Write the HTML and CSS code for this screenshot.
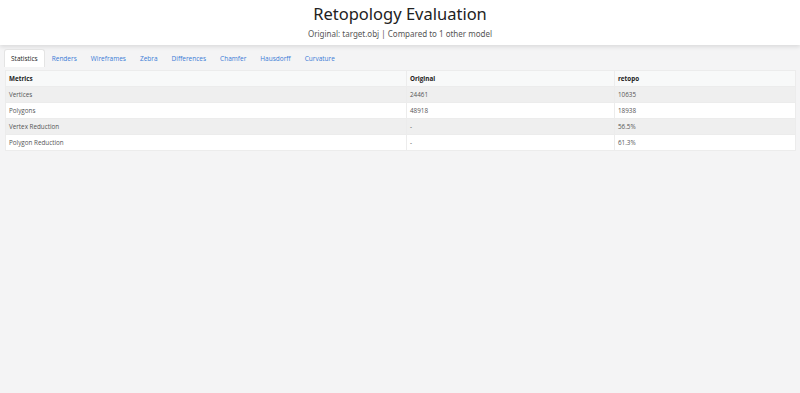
FILE: index.html
```html
<!DOCTYPE html>
<html lang="en">
<head>
    <meta charset="UTF-8">
    <meta name="viewport" content="width=device-width, initial-scale=1.0">
    <title>Retopology Evaluation</title>
    <link rel="stylesheet" href="styles.css">
</head>
<body>

<div class="header">
    <h1>Retopology Evaluation</h1>
    <p>Original: target.obj | Compared to 1 other model</p>
</div>

<div class="tabs">
    <div class="tab active">Statistics</div>
    <div class="tab">Renders</div>
    <div class="tab">Wireframes</div>
    <div class="tab">Zebra</div>
    <div class="tab">Differences</div>
    <div class="tab">Chamfer</div>
    <div class="tab">Hausdorff</div>
    <div class="tab">Curvature</div>
</div>

<div class="panel">
    <table class="stats">
        <thead>
            <tr>
                <th class="col-metric">Metrics</th>
                <th class="col-orig">Original</th>
                <th>retopo</th>
            </tr>
        </thead>
        <tbody>
            <tr><td>Vertices</td><td>24461</td><td>10635</td></tr>
            <tr><td>Polygons</td><td>48918</td><td>18938</td></tr>
            <tr><td>Vertex Reduction</td><td>-</td><td>56.5%</td></tr>
            <tr><td>Polygon Reduction</td><td>-</td><td>61.3%</td></tr>
        </tbody>
    </table>
</div>

</body>
</html>
```

FILE: styles.css
```css
body {
    font-family: 'Open Sans', sans-serif;
    background-color: #f4f4f5;
    margin: 0;
    color: #333;
}

.header {
    background-color: #fff;
    box-shadow: 0 2px 4px rgba(0, 0, 0, 0.1);
    text-align: center;
    height: 45px;
    padding-top: 3px;
    box-sizing: border-box;
}

.header h1 {
    font-family: 'Noto Sans', sans-serif;
    font-weight: 400;
    font-size: 16.5px;
    line-height: 22px;
    margin: 0;
    color: #222;
}

.header p {
    font-family: 'Noto Sans', sans-serif;
    font-size: 8px;
    line-height: 12px;
    margin: 3px 0 0;
    color: #555;
}

.tabs {
    display: flex;
    padding: 4px 4px 0;
}

.tab {
    font-size: 6.5px;
    line-height: 17px;
    padding: 0 6px;
    color: #3a7bd5;
    border: 1px solid transparent;
    border-bottom: none;
    border-radius: 3px 3px 0 0;
}

.tab.active {
    background-color: #fff;
    color: #222;
    border-color: #e4e4e4;
}

.panel {
    padding: 3px 4px 0 5px;
}

.stats {
    width: 100%;
    border-collapse: collapse;
    background-color: #fff;
    font-size: 6.3px;
}

.stats th,
.stats td {
    height: 15px;
    padding: 0 3px;
    text-align: left;
    border: 1px solid #ececec;
    color: #555;
}

.stats th {
    font-weight: 700;
    color: #222;
    background-color: #f8f9f9;
}

.col-metric {
    width: 394px;
}

.col-orig {
    width: 201px;
}

.stats tbody tr:nth-child(odd) td {
    background-color: #efefef;
}
```
